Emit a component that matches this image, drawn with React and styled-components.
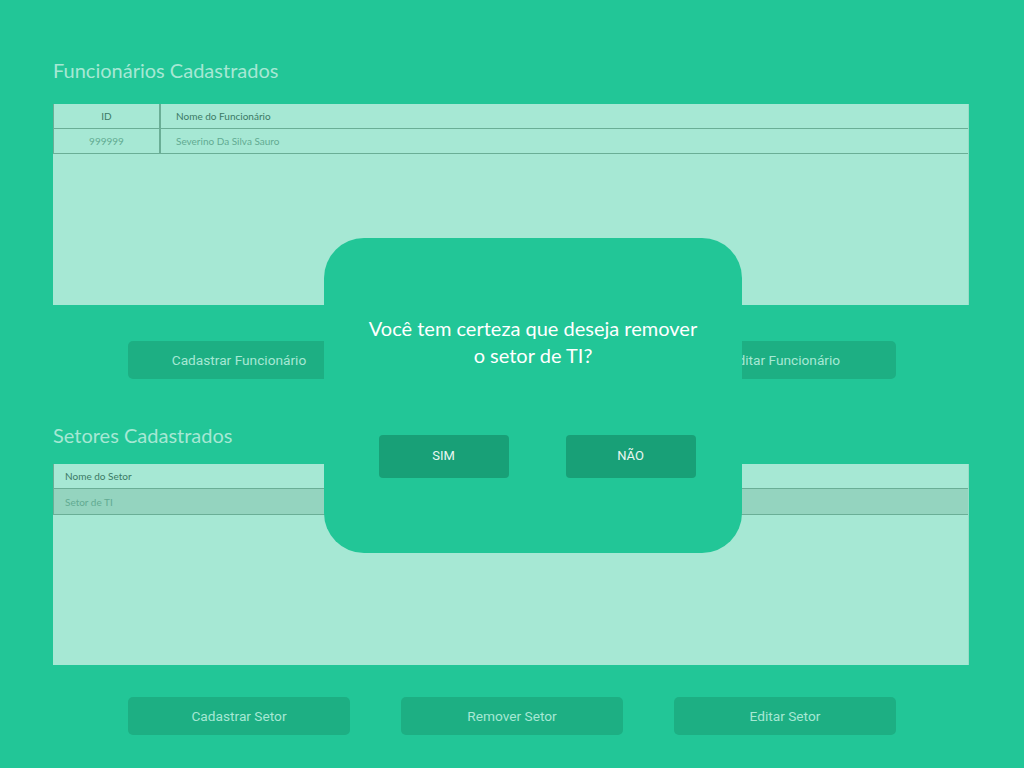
import React from 'react';
import styled, { createGlobalStyle } from 'styled-components';

const GlobalStyle = createGlobalStyle`
  html, body {
    margin: 0;
    padding: 0;
    background: #22c697;
  }
  body {
    font-family: Lato, "Open Sans", sans-serif;
  }
`;

const Page = styled.div`
  width: 1024px;
  height: 768px;
  overflow: hidden;
  padding: 0 55px 0 53px;
  box-sizing: border-box;
`;

const Section = styled.section`
  padding-top: ${p => p.top}px;
`;

const Title = styled.h2`
  margin: 0 0 ${p => p.gap}px;
  font-weight: 400;
  font-size: 20px;
  line-height: 24px;
  color: #a6e8d4;
`;

const Table = styled.div`
  height: 201px;
  background: #a6e8d4;
  border-right: 1px solid #98dcc6;
  box-sizing: border-box;
`;

const Row = styled.div`
  display: grid;
  grid-template-columns: ${p => p.cols};
  height: ${p => p.h || 25}px;
  background: ${p => (p.selected ? '#94d4bf' : 'transparent')};
  border-bottom: 1px solid #6aae96;
  border-left: 1px solid #6aae96;
  box-sizing: border-box;
`;

const Cell = styled.div`
  display: flex;
  align-items: center;
  justify-content: ${p => (p.center ? 'center' : 'flex-start')};
  padding-left: ${p => p.pad || 0}px;
  font-size: 10px;
  color: ${p => (p.head ? '#3b7a65' : '#62ab92')};
  border-right: ${p => (p.divider ? '2px solid #6aae96' : 'none')};
`;

const ButtonRow = styled.div`
  display: flex;
  justify-content: center;
  gap: 51px;
  padding: ${p => p.top}px 20px 0 22px;
`;

const ActionButton = styled.button`
  width: 222px;
  height: 38px;
  border: none;
  border-radius: 5px;
  background: #1daf83;
  color: #a6e8d4;
  font-family: Roboto, sans-serif;
  font-size: 13.7px;
  cursor: pointer;
`;

const Modal = styled.div`
  position: fixed;
  left: 324px;
  top: 238px;
  width: 418px;
  height: 315px;
  border-radius: 40px;
  background: #22c697;
  display: flex;
  flex-direction: column;
  align-items: center;
  box-sizing: border-box;
  padding-top: 77px;
`;

const Question = styled.p`
  margin: 0;
  text-align: center;
  color: #ffffff;
  font-size: 20px;
  line-height: 27px;
`;

const ModalButtons = styled.div`
  display: flex;
  gap: 57px;
  margin: 66px 0 0 8px;
`;

const ModalButton = styled.button`
  width: 130px;
  height: 43px;
  border: none;
  border-radius: 4px;
  background: #18a077;
  color: #e8f7f1;
  font-family: Roboto, sans-serif;
  font-size: 13px;
  padding-bottom: 4px;
  cursor: pointer;
`;

export default function App() {
  return (
    <>
      <GlobalStyle />
      <Page>
        <Section top={58}>
          <Title gap={22}>Funcionários Cadastrados</Title>
          <Table>
            <Row cols="107px 1fr">
              <Cell head center divider>ID</Cell>
              <Cell head pad={15}>Nome do Funcionário</Cell>
            </Row>
            <Row cols="107px 1fr">
              <Cell center divider>999999</Cell>
              <Cell pad={15}>Severino Da Silva Sauro</Cell>
            </Row>
          </Table>
          <ButtonRow top={36}>
            <ActionButton>Cadastrar Funcionário</ActionButton>
            <ActionButton>Remover Funcionário</ActionButton>
            <ActionButton>Editar Funcionário</ActionButton>
          </ButtonRow>
        </Section>
        <Section top={44}>
          <Title gap={17}>Setores Cadastrados</Title>
          <Table>
            <Row cols="1fr">
              <Cell head pad={11}>Nome do Setor</Cell>
            </Row>
            <Row cols="1fr" h={26} selected>
              <Cell pad={11}>Setor de TI</Cell>
            </Row>
          </Table>
          <ButtonRow top={32}>
            <ActionButton>Cadastrar Setor</ActionButton>
            <ActionButton>Remover Setor</ActionButton>
            <ActionButton>Editar Setor</ActionButton>
          </ButtonRow>
        </Section>
        <Modal>
          <Question>
            Você tem certeza que deseja remover
            <br />o setor de TI?
          </Question>
          <ModalButtons>
            <ModalButton>SIM</ModalButton>
            <ModalButton>NÃO</ModalButton>
          </ModalButtons>
        </Modal>
      </Page>
    </>
  );
}
